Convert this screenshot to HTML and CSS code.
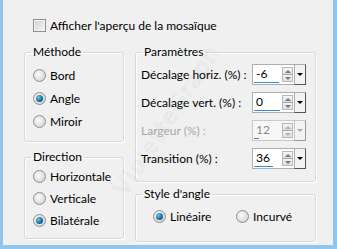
FILE: index.html
```html
<!DOCTYPE html>
<html lang="fr">
<head>
    <meta charset="UTF-8">
    <title>Mosaïque</title>
    <link rel="stylesheet" href="styles.css">
</head>
<body>

<div class="window">
    <label class="check-row"><span class="checkbox"></span>Afficher l'aperçu de la mosaïque</label>

    <div class="columns">
        <div class="col-left">
            <fieldset class="group method">
                <legend>Méthode</legend>
                <div class="group-body">
                    <div class="radio-row"><span class="radio"></span>Bord</div>
                    <div class="radio-row"><span class="radio on"></span>Angle</div>
                    <div class="radio-row"><span class="radio"></span>Miroir</div>
                </div>
            </fieldset>

            <fieldset class="group direction">
                <legend>Direction</legend>
                <div class="group-body">
                    <div class="radio-row"><span class="radio"></span>Horizontale</div>
                    <div class="radio-row"><span class="radio"></span>Verticale</div>
                    <div class="radio-row"><span class="radio on"></span>Bilatérale</div>
                </div>
            </fieldset>
        </div>

        <div class="col-right">
            <fieldset class="group params">
                <legend>Paramètres</legend>
                <div class="group-body">
                    <div class="param-row">
                        <span class="param-label">Décalage horiz. (%) :</span>
                        <div class="spin">
                            <div class="spin-box">
                                <div class="spin-value"><span>-6</span><span class="bar" style="width:25px"></span></div>
                                <div class="spin-arrows"><span class="arr up"></span><span class="arr down"></span></div>
                            </div>
                            <div class="spin-drop"><span class="tri"></span></div>
                        </div>
                    </div>

                    <div class="param-row">
                        <span class="param-label">Décalage vert. (%) :</span>
                        <div class="spin">
                            <div class="spin-box">
                                <div class="spin-value"><span>0</span><span class="bar" style="width:26px"></span></div>
                                <div class="spin-arrows"><span class="arr up"></span><span class="arr down"></span></div>
                            </div>
                            <div class="spin-drop"><span class="tri"></span></div>
                        </div>
                    </div>

                    <div class="param-row disabled">
                        <span class="param-label">Largeur (%) :</span>
                        <div class="spin">
                            <div class="spin-box">
                                <div class="spin-value"><span>12</span><span class="bar" style="width:5px"></span></div>
                                <div class="spin-arrows"><span class="arr up"></span><span class="arr down"></span></div>
                            </div>
                            <div class="spin-drop"><span class="tri"></span></div>
                        </div>
                    </div>

                    <div class="param-row">
                        <span class="param-label">Transition (%) :</span>
                        <div class="spin">
                            <div class="spin-box">
                                <div class="spin-value"><span>36</span><span class="bar" style="width:19px"></span></div>
                                <div class="spin-arrows"><span class="arr up"></span><span class="arr down"></span></div>
                            </div>
                            <div class="spin-drop"><span class="tri"></span></div>
                        </div>
                    </div>
                </div>
            </fieldset>

            <fieldset class="group style">
                <legend>Style d'angle</legend>
                <div class="group-body">
                    <div class="radio-row first"><span class="radio on"></span>Linéaire</div>
                    <div class="radio-row"><span class="radio"></span>Incurvé</div>
                </div>
            </fieldset>
        </div>
    </div>

    <span class="watermark">VioletteGraph</span>
</div>

</body>
</html>
```

FILE: styles.css
```css
* {
    box-sizing: border-box;
}
body {
    margin: 0;
    font-family: Lato, "Noto Sans", sans-serif;
    font-size: 12px;
    color: #000;
}
.window {
    position: relative;
    width: 337px;
    height: 249px;
    background: #f0f0f0;
    border-style: solid;
    border-color: #8fc7ec;
    border-width: 0 4px 4px 3px;
    padding: 19px 0 0 21px;
    overflow: hidden;
}
.check-row {
    display: flex;
    align-items: center;
    gap: 4px;
    height: 13px;
    padding-left: 9px;
    white-space: nowrap;
}
.checkbox {
    width: 13px;
    height: 13px;
    flex: none;
    border: 1px solid #8e8f8f;
    box-shadow: inset 0 0 0 1px #f4f4f4;
    background: linear-gradient(135deg, #cdd0d4, #f7f7f7);
}
.columns {
    display: flex;
    gap: 11px;
    margin-top: 12px;
}
.col-left {
    width: 100px;
}
.col-right {
    width: 181px;
}
.group {
    margin: 0;
    padding: 0;
    border: 1px solid #d8d8d8;
    border-radius: 3px;
    box-shadow: 1px 1px 0 #fff, inset 1px 1px 0 #fff;
}
legend {
    margin-left: 6px;
    padding: 0 2px;
    line-height: 16px;
}
.method .group-body {
    padding: 4px 0 8px 8px;
}
.method .radio-row {
    height: 23px;
}
.direction {
    margin-top: 7px;
}
.direction .group-body {
    padding: 0 0 7px 8px;
}
.direction .radio-row {
    height: 22px;
}
.radio-row {
    display: flex;
    align-items: center;
    gap: 4px;
    white-space: nowrap;
}
.radio {
    width: 13px;
    height: 13px;
    flex: none;
    border-radius: 50%;
    border: 1px solid #8e8f8f;
    background: radial-gradient(circle at 40% 40%, #fdfdfd, #d6d6d6 75%);
    display: flex;
    align-items: center;
    justify-content: center;
}
.radio.on::after {
    content: "";
    width: 7px;
    height: 7px;
    border-radius: 50%;
    background: radial-gradient(circle at 35% 35%, #6cc4f2, #1a6fa3 55%, #0c3d5e);
}
.params .group-body {
    padding: 4px 9px 12px 5px;
}
.param-row {
    display: flex;
    align-items: center;
    height: 21px;
    margin-bottom: 7px;
}
.param-row:last-child {
    margin-bottom: 0;
}
.param-label {
    width: 111px;
    white-space: nowrap;
}
.spin {
    display: flex;
    width: 54px;
    height: 21px;
}
.spin-box {
    flex: 1;
    display: flex;
    background: #fff;
    border: 1px solid #abadb3;
    border-right: 0;
}
.spin-value {
    flex: 1;
    display: flex;
    flex-direction: column;
    padding: 1px 0 1px 1px;
}
.spin-value span:first-child {
    padding-left: 2px;
    line-height: 16px;
}
.bar {
    height: 3px;
    margin-top: auto;
    background: #3a8ad2;
}
.spin-arrows {
    width: 11px;
    margin: 2px 1px 2px 0;
    display: flex;
    flex-direction: column;
    border: 1px solid #b9b9b9;
}
.arr {
    flex: 1;
    display: flex;
    align-items: center;
    justify-content: center;
    background: linear-gradient(#f6f6f6, #dedede);
}
.arr.up {
    border-bottom: 1px solid #9aa;
}
.arr::after {
    content: "";
    border-left: 3px solid transparent;
    border-right: 3px solid transparent;
}
.arr.up::after {
    border-bottom: 3px solid #6b7b8c;
}
.arr.down::after {
    border-top: 3px solid #6b7b8c;
}
.spin-drop {
    width: 12px;
    display: flex;
    align-items: center;
    justify-content: center;
    background: #f3f3f3;
    border: 1px solid #abadb3;
    border-right-color: #555;
    border-bottom-color: #555;
}
.tri {
    border-left: 3px solid transparent;
    border-right: 3px solid transparent;
    border-top: 3px solid #000;
}
.disabled .param-label {
    color: #a8a8a8;
}
.disabled .spin-box {
    background: #f7f7f7;
    border-color: #c9c9c9;
}
.disabled .spin-value span:first-child {
    color: #8a8a8a;
}
.disabled .arr::after {
    border-bottom-color: #b0b0b0;
    border-top-color: #b0b0b0;
}
.disabled .tri {
    border-top-color: #aaa;
}
.disabled .spin-drop {
    border-color: #c9c9c9;
    border-right-color: #999;
    border-bottom-color: #999;
}
.style {
    margin-top: 4px;
}
.style .group-body {
    display: flex;
    height: 39px;
    padding: 3px 0 14px 17px;
}
.style .first {
    width: 83px;
}
.watermark {
    position: absolute;
    left: 75px;
    top: 105px;
    font-size: 24px;
    letter-spacing: 2px;
    color: transparent;
    -webkit-text-stroke: 0.5px rgba(150, 150, 150, 0.25);
    transform: rotate(-57deg);
    pointer-events: none;
}
```
